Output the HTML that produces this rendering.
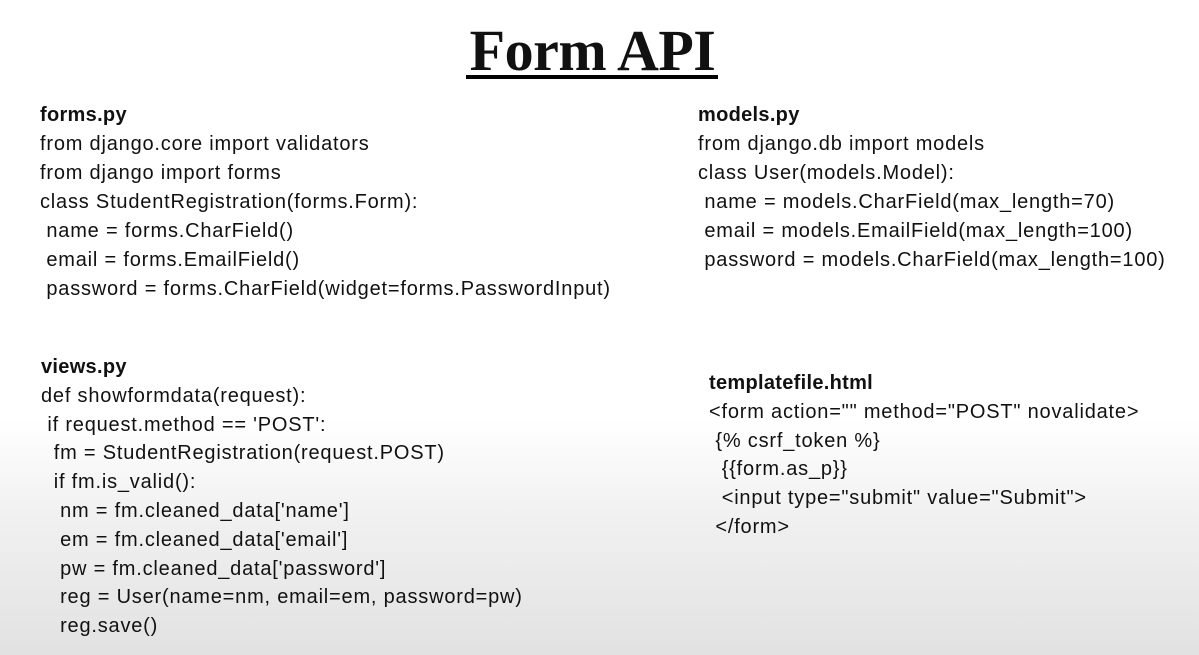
<!DOCTYPE html>
<html><head><style>
html,body{margin:0;padding:0}
body{width:1199px;height:655px;position:relative;overflow:hidden;
background:linear-gradient(to bottom,#fff 0,#fff 420px,#f0f0f0 520px,#e2e2e2 655px);
font-family:"Liberation Sans",sans-serif;color:#111}
.t{position:absolute;left:467px;top:18px;width:251px;text-align:center;font-family:"Liberation Serif",serif;font-weight:bold;font-size:58px;line-height:66px;white-space:nowrap;letter-spacing:-0.5px}
.u{position:absolute;left:466px;top:75px;width:252px;height:4px;background:#000}
.b{position:absolute;font-size:20px;letter-spacing:0.8px;line-height:29px;white-space:pre}
.b b{font-weight:bold;letter-spacing:0.3px}
</style></head><body>
<div class="t">Form API</div>
<div class="u"></div>
<div class="b" style="left:40px;top:101px"><b>forms.py</b>
from django.core import validators
from django import forms
class StudentRegistration(forms.Form):
 name = forms.CharField()
 email = forms.EmailField()
 password = forms.CharField(widget=forms.PasswordInput)</div>
<div class="b" style="left:698px;top:101px"><b>models.py</b>
from django.db import models
class User(models.Model):
 name = models.CharField(max_length=70)
 email = models.EmailField(max_length=100)
 password = models.CharField(max_length=100)</div>
<div class="b" style="left:41px;top:353px;line-height:28.8px"><b>views.py</b>
def showformdata(request):
 if request.method == 'POST':
  fm = StudentRegistration(request.POST)
  if fm.is_valid():
   nm = fm.cleaned_data['name']
   em = fm.cleaned_data['email']
   pw = fm.cleaned_data['password']
   reg = User(name=nm, email=em, password=pw)
   reg.save()</div>
<div class="b" style="left:709px;top:369px;line-height:28.8px"><b>templatefile.html</b>
&lt;form action="" method="POST" novalidate&gt;
 {% csrf_token %}
  {{form.as_p}}
  &lt;input type="submit" value="Submit"&gt;
 &lt;/form&gt;</div>
</body></html>
